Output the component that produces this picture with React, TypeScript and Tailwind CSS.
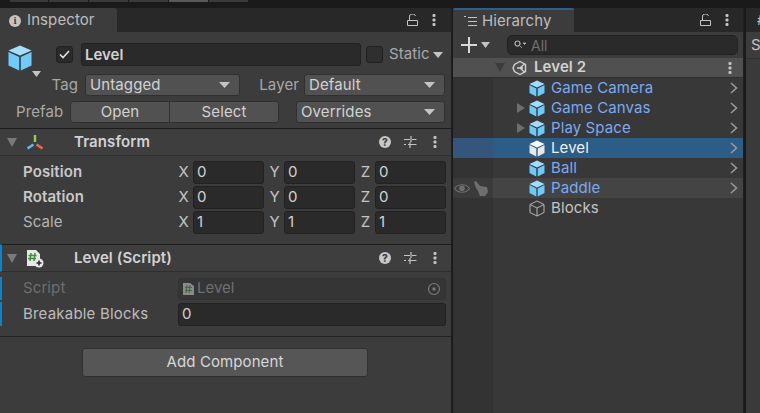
import React from "react";

const Cube = ({ kind = "blue" }: { kind?: "blue" | "white" | "outline" }) => {
  if (kind === "outline")
    return (
      <svg width="16" height="17" viewBox="0 0 16 17" className="shrink-0">
        <path d="M8 1 15 4.5V12.5L8 16 1 12.5V4.5Z M1 4.500 8 8 15 4.500 M8 8V16" fill="none" stroke="#b4b4b4" strokeWidth="1" />
      </svg>
    );
  const top = kind === "blue" ? "#9fdcff" : "#ffffff";
  const side = kind === "blue" ? "#6ccafa" : "#e8e8e8";
  return (
    <svg width="16" height="17" viewBox="0 0 16 17" className="shrink-0">
      <path d="M8 .5 15.500 4 8 7.500.5 4Z" fill={top} />
      <path d="M.5 5 7.300 8.400V16.500L.5 13Z" fill={side} />
      <path d="M15.500 5 8.700 8.400V16.500L15.500 13Z" fill={side} />
    </svg>
  );
};

const BigCube = () => (
  <svg width="24" height="26" viewBox="0 0 24 26">
    <path d="M12 .5 23.500 5.500 12 10.500.5 5.500Z" fill="#a4dfff" />
    <path d="M.5 7 11.200 12V25.500L.5 20.500Z" fill="#6fcbfb" />
    <path d="M23.500 7 12.800 12V25.500L23.500 20.500Z" fill="#6fcbfb" />
  </svg>
);

const Caret = ({ color = "#c4c4c4", w = 11 }: { color?: string; w?: number }) => (
  <svg width={w} height="6" viewBox="0 0 11 6" className="shrink-0" preserveAspectRatio="none">
    <path d="M0 0H11L5.500 6Z" fill={color} />
  </svg>
);

const Lock = () => (
  <svg width="11" height="12" viewBox="0 0 11 12" className="shrink-0">
    <path d="M.5 6.500H10.500V11.500H.5Z" fill="none" stroke="#c4c4c4" strokeWidth="1" />
    <path d="M2.500 6V3A3 2.500 0 0 1 8.500 2" fill="none" stroke="#c4c4c4" strokeWidth="1" />
  </svg>
);

const Dots = ({ color = "#c4c4c4" }: { color?: string }) => (
  <svg width="4" height="12" viewBox="0 0 4 12" className="shrink-0">
    <rect x="0.500" y="0" width="3" height="3" rx="1" fill={color} />
    <rect x="0.500" y="4.500" width="3" height="3" rx="1" fill={color} />
    <rect x="0.500" y="9" width="3" height="3" rx="1" fill={color} />
  </svg>
);

const Sliders = () => (
  <svg width="13" height="12" viewBox="0 0 13 12" className="shrink-0">
    <path d="M0 3.500H6M8 3.500H12.500M7 0V6M0 8.500H2M4 8.500H12.500M6 6V12" fill="none" stroke="#c4c4c4" strokeWidth="1.200" />
  </svg>
);

const Help = () => (
  <span className="flex h-3 w-3 shrink-0 items-center justify-center rounded-full bg-[#c8c8c8] text-[10px] leading-none font-extrabold text-[#3c3c3c]">?</span>
);

const Tri = ({ color = "#7a7a7a" }: { color?: string }) => (
  <svg width="10" height="9" viewBox="0 0 10 9" className="shrink-0">
    <path d="M0 0H10L5 9Z" fill={color} />
  </svg>
);

const Right = () => (
  <svg width="8" height="12" viewBox="0 0 8 12" className="shrink-0">
    <path d="M1 1 6.500 6 1 11" fill="none" stroke="#9a9a9a" strokeWidth="1.600" />
  </svg>
);

const Dropdown = ({ label, className }: { label: string; className: string }) => (
  <div className={`flex h-[22px] items-center justify-between rounded-[3px] border border-[#303030] bg-[#515151] pr-[9px] pl-[4px] text-[15px] tracking-[0.1px] text-[#d2d2d2] ${className}`}>
    <span>{label}</span>
    <Caret />
  </div>
);

const NumField = ({ axis, value }: { axis: string; value: string }) => (
  <div className="flex flex-1 items-center gap-[4px]">
    <span className="w-[11px] text-center text-[15px] text-[#c4c4c4]">{axis}</span>
    <div className="flex h-[23px] flex-1 items-center rounded-[3px] border border-[#212121] bg-[#2a2a2a] pl-[3px] text-[15px] text-[#d2d2d2]">{value}</div>
  </div>
);

const VecRow = ({ label, values, bold }: { label: string; values: string[]; bold?: boolean }) => (
  <div className="flex h-[25px] items-center">
    <span className={`w-[178px] pl-[23px] text-[15px] tracking-[0.1px] ${bold ? "font-semibold text-[#c8c8c8]" : "text-[#b4b4b4]"}`}>{label}</span>
    <div className="flex flex-1 gap-[5px]">
      <NumField axis="X" value={values[0]} />
      <NumField axis="Y" value={values[1]} />
      <NumField axis="Z" value={values[2]} />
    </div>
  </div>
);

const ComponentHeader = ({ icon, title, marked }: { icon: React.ReactNode; title: string; marked?: boolean }) => (
  <div className={`flex h-[28px] shrink-0 items-center border-y border-t-[#1c1c1c] border-b-[#2e2e2e] bg-[#3e3e3e] pr-[14px] ${marked ? "border-l-2 border-l-[#0a84d0]" : ""}`}>
    <div className={`flex items-center ${marked ? "w-[72px] pl-[5px]" : "w-[74px] pl-[7px]"}`}>
      <Tri />
      <span className="ml-[9px] flex w-[18px] justify-center">{icon}</span>
    </div>
    <span className="flex-1 text-[15px] font-semibold tracking-[0.1px] text-[#d2d2d2]">{title}</span>
    <div className="flex items-center">
      <Help />
      <span className="ml-[13px]"><Sliders /></span>
      <span className="ml-[16px]"><Dots /></span>
    </div>
  </div>
);

const TabLabel = ({ children }: { children: React.ReactNode }) => (
  <span className="text-[15px] tracking-[0.1px] text-[#bdbdbd]">{children}</span>
);

const HierRow = ({ label, kind = "blue", arrow, cls = "", textCls = "text-[#7baaf0]", strip = "bg-[#333333]", hint }: {
  label: string;
  kind?: "blue" | "white" | "outline";
  arrow?: boolean;
  cls?: string;
  textCls?: string;
  strip?: string;
  hint?: React.ReactNode;
}) => (
  <div className={`flex h-[20px] items-center ${cls}`}>
    <div className={`flex h-full w-[40px] shrink-0 items-center gap-[3px] pl-[1px] ${strip}`}>{hint}</div>
    <span className="flex w-[36px] shrink-0 justify-end pr-[4px]">
      {arrow && (
        <svg width="8" height="10" viewBox="0 0 8 10"><path d="M0 0 8 5 0 10Z" fill="#6e6e6e" /></svg>
      )}
    </span>
    <Cube kind={kind} />
    <span className={`ml-[6px] flex-1 text-[15px] tracking-[0.1px] ${textCls}`}>{label}</span>
    <span className="pr-[5px]"><Right /></span>
  </div>
);

export default function App() {
  return (
    <div className="flex h-[413px] w-[760px] flex-col overflow-hidden bg-[#1a1a1a] font-['Inter','Noto_Sans',sans-serif]">
      <div className="h-[8px] shrink-0">
        <div className="flex h-[2px]">
          <div className="ml-[10px] h-full w-[38px] bg-[#3a3a3a]" />
          <div className="ml-[1px] h-full w-[39px] bg-[#3a3a3a]" />
          <div className="ml-[1px] h-full w-[39px] bg-[#3a3a3a]" />
          <div className="ml-[1px] h-full w-[39px] bg-[#3a3a3a]" />
          <div className="ml-[1px] h-full w-[39px] bg-[#585858]" />
          <div className="ml-[1px] h-full w-[39px] bg-[#3a3a3a]" />
        </div>
      </div>
      <div className="flex min-h-0 flex-1">
        {/* Inspector */}
        <div className="mr-[1px] flex w-[452px] shrink-0 flex-col border-r border-[#1f1f1f]">
          <div className="flex h-[24px] shrink-0 bg-[#282828]">
            <div className="flex w-[117px] items-center gap-[6px] rounded-tr-[3px] bg-[#3c3c3c] pt-[1px] pl-[9px]">
              <span className="flex h-3 w-3 items-center justify-center rounded-full bg-[#c4c4c4] font-serif text-[10px] leading-none font-bold text-[#3c3c3c]">i</span>
              <TabLabel>Inspector</TabLabel>
            </div>
            <div className="flex flex-1 items-center justify-end gap-[14px] pr-[15px]">
              <Lock />
              <Dots />
            </div>
          </div>
          <div className="flex min-h-0 flex-1 flex-col bg-[#3c3c3c]">
            <div className="flex h-[96px] shrink-0 flex-col">
              <div className="flex h-[42px] shrink-0 pt-[11px] pr-[8px]">
                <div className="relative w-[56px] shrink-0 pt-[2px] pl-[8px]">
                  <BigCube />
                  <span className="absolute top-[28px] left-[32px]"><Caret w={9} /></span>
                </div>
                <div className="flex h-[17px] w-[17px] shrink-0 translate-y-[3px] items-center justify-center rounded-[3px] border border-[#212121] bg-[#2a2a2a]">
                  <svg width="11" height="9" viewBox="0 0 11 9"><path d="M1 4.500 4 7.500 10 1" fill="none" stroke="#e0e0e0" strokeWidth="1.600" /></svg>
                </div>
                <div className="ml-[8px] flex h-[23px] w-[280px] shrink-0 items-center rounded-[3px] border border-[#212121] bg-[#2a2a2a] pt-[1px] pl-[3px] text-[15px] font-semibold text-[#d2d2d2]">Level</div>
                <div className="ml-[5px] h-[17px] w-[17px] shrink-0 translate-y-[3px] rounded-[3px] border border-[#212121] bg-[#2f2f2f]" />
                <div className="ml-[6px] flex h-[23px] items-center gap-[3px] text-[15px] tracking-[0.1px] text-[#a8a8a8]">
                  Static
                  <Caret w={10} />
                </div>
              </div>
              <div className="flex h-[22px] shrink-0 items-center">
                <span className="w-[85px] pr-[7px] text-right text-[15px] tracking-[0.1px] text-[#a8a8a8]">Tag</span>
                <Dropdown label="Untagged" className="w-[155px]" />
                <span className="w-[64px] pr-[5px] text-right text-[15px] tracking-[0.1px] text-[#a8a8a8]">Layer</span>
                <Dropdown label="Default" className="w-[141px]" />
              </div>
              <div className="mt-[5px] flex h-[22px] shrink-0 items-center">
                <span className="w-[70px] pl-[16px] text-[15px] tracking-[0.1px] text-[#a8a8a8]">Prefab</span>
                <div className="flex h-full w-[209px] rounded-[3px] border border-[#303030] bg-[#515151] text-center text-[15px] tracking-[0.1px] text-[#d2d2d2]">
                  <span className="w-[99px] border-r border-[#303030] leading-[20px]">Open</span>
                  <span className="flex-1 leading-[20px]">Select</span>
                </div>
                <Dropdown label="Overrides" className="ml-[17px] w-[149px]" />
              </div>
            </div>
            <ComponentHeader
              title="Transform"
              icon={
                <svg width="16" height="15" viewBox="0 0 16 15">
                  <path d="M8 0V7" stroke="#8fd14f" strokeWidth="2.400" />
                  <path d="M9.500 9.500 15.500 13.500" stroke="#f0683c" strokeWidth="2.600" />
                  <path d="M6.500 9.500.5 13.500" stroke="#5cb8ef" strokeWidth="2.600" />
                </svg>
              }
            />
            <div className="flex shrink-0 flex-col pt-[4px] pr-[5px] pb-[9px]">
              <VecRow label="Position" values={["0", "0", "0"]} bold />
              <VecRow label="Rotation" values={["0", "0", "0"]} bold />
              <VecRow label="Scale" values={["1", "1", "1"]} />
            </div>
            <ComponentHeader
              marked
              title="Level (Script)"
              icon={
                <svg width="18" height="19" viewBox="0 0 18 19">
                  <path d="M1 1H10L14 5V17H1Z" fill="#e8e8e8" />
                  <path d="M5 4 4 12M9 4 8 12M2.500 6.500H10.500M2 9.500H10" stroke="#3e8e3e" strokeWidth="1.500" fill="none" />
                  <circle cx="13" cy="14" r="4.500" fill="#e8e8e8" />
                  <path d="M13 11.500V16.500M10.500 14H15.500" stroke="#2a2a2a" strokeWidth="1.600" />
                </svg>
              }
            />
            <div className="flex h-[65px] shrink-0 flex-col gap-[2px] border-b border-[#232323] pt-[5px] pr-[5px]">
              <div className="flex h-[23px] items-center border-l-2 border-[#0a84d0]">
                <span className="w-[176px] pl-[21px] text-[15px] tracking-[0.1px] text-[#6f6f6f]">Script</span>
                <div className="flex h-[22px] flex-1 items-center rounded-[3px] border border-[#333333] bg-[#353535] pr-[4px] pl-[4px] text-[15px] text-[#707070]">
                  <svg width="11" height="13" viewBox="0 0 11 13" className="mr-[3px]">
                    <path d="M0 1H7L11 4V13H0Z" fill="#8a8a8a" />
                    <path d="M4 3 3 11M7 3 6 11M2 5.500H9M2 8.500H9" stroke="#3f6a3f" strokeWidth="1.100" fill="none" />
                  </svg>
                  <span className="flex-1">Level</span>
                  <svg width="14" height="14" viewBox="0 0 14 14">
                    <circle cx="7" cy="7" r="5.500" fill="none" stroke="#7a7a7a" strokeWidth="1.200" />
                    <rect x="5.500" y="5.500" width="3" height="3" fill="#7a7a7a" />
                  </svg>
                </div>
              </div>
              <div className="flex h-[24px] items-center border-l-2 border-[#0a84d0]">
                <span className="w-[176px] pl-[21px] text-[15px] tracking-[0.2px] text-[#bdbdbd]">Breakable Blocks</span>
                <div className="flex h-[23px] flex-1 items-center rounded-[3px] border border-[#212121] bg-[#2a2a2a] pl-[3px] text-[15px] text-[#d2d2d2]">0</div>
              </div>
            </div>
            <div className="flex justify-center pt-[11px] pr-[1px]">
              <div className="flex h-[29px] w-[286px] items-center justify-center rounded-[3px] border border-[#303030] bg-[#565656] text-[15px] tracking-[0.1px] text-[#d8d8d8]">Add Component</div>
            </div>
          </div>
        </div>

        {/* Hierarchy */}
        <div className="mr-[2px] flex w-[291px] shrink-0 flex-col border-r border-[#1f1f1f]">
          <div className="flex h-[24px] shrink-0 bg-[#282828]">
            <div className="flex w-[121px] items-center gap-[5px] rounded-t-[2px] border-t-2 border-[#2d5f8d] bg-[#3c3c3c] pl-[11px]">
              <svg width="13" height="11" viewBox="0 0 13 11">
                <path d="M0 .5H2M4 1.500H13M4 5.500H13M4 9.500H13" stroke="#c4c4c4" strokeWidth="1" />
              </svg>
              <TabLabel>Hierarchy</TabLabel>
            </div>
            <div className="flex flex-1 items-center justify-end gap-[14px] pr-[14px]">
              <Lock />
              <Dots />
            </div>
          </div>
          <div className="flex h-[26px] shrink-0 items-center bg-[#3c3c3c]">
            <div className="flex w-[54px] shrink-0 items-center gap-[4px] pl-[8px]">
              <svg width="16" height="16" viewBox="0 0 16 16"><path d="M8 0V16M0 8H16" stroke="#d8d8d8" strokeWidth="2" /></svg>
              <Caret w={9} />
            </div>
            <div className="flex h-[20px] w-[231px] items-center gap-[5px] rounded-[5px] border border-[#212121] bg-[#2a2a2a] pl-[6px] text-[14px] text-[#707070]">
              <svg width="12" height="10" viewBox="0 0 12 10">
                <circle cx="3.500" cy="3.500" r="2.500" fill="none" stroke="#b0b0b0" strokeWidth="1.200" />
                <path d="M5.500 5.500 8 8M9 3H12L10.500 4.500Z" stroke="#b0b0b0" fill="#b0b0b0" strokeWidth="0.800" />
              </svg>
              All
            </div>
          </div>
          <div className="flex min-h-0 flex-1 flex-col bg-[#383838]">
            <div className="flex h-[20px] shrink-0 items-center border-b border-[#2e2e2e] bg-[#505050] pr-[11px]">
              <span className="ml-[42px]"><Tri color="#3c3c3c" /></span>
              <svg width="16" height="16" viewBox="0 0 16 16" className="ml-[7px]">
                <path d="M8 1.500 13.500 4.500V11.500L8 14.500 2.500 11.500 1 8 2.500 4.500Z M5 8 H11 M8 8 12.500 4 M8 8 12.500 12" fill="none" stroke="#d2d2d2" strokeWidth="1.400" />
              </svg>
              <span className="ml-[6px] flex-1 text-[15px] font-semibold tracking-[0.1px] text-[#d2d2d2]">Level 2</span>
              <Dots />
            </div>
            <HierRow label="Game Camera" />
            <HierRow label="Game Canvas" arrow />
            <HierRow label="Play Space" arrow />
            <HierRow label="Level" kind="white" cls="bg-[#2c5d87]" textCls="text-[#f0f0f0]" strip="bg-[#34557c]" />
            <HierRow label="Ball" />
            <HierRow
              label="Paddle"
              cls="bg-[#444444]"
              strip="bg-[#3b3b3b]"
              hint={
                <>
                  <svg width="16" height="11" viewBox="0 0 16 11">
                    <path d="M.5 5.500C4 .5 12 .5 15.500 5.500 12 10.500 4 10.500.5 5.500Z" fill="none" stroke="#6e6e6e" strokeWidth="1.200" />
                    <circle cx="8" cy="5.200" r="2.800" fill="#6e6e6e" />
                  </svg>
                  <svg width="15" height="15" viewBox="0 0 15 15">
                    <path d="M1 1 3 0 7 5 14 6 15 11 12 15H7L5 10 3 7Z" fill="#6e6e6e" />
                  </svg>
                </>
              }
            />
            <div className="flex h-[20px] items-center">
              <div className="h-full w-[40px] shrink-0 bg-[#333333]" />
              <span className="w-[36px] shrink-0" />
              <Cube kind="outline" />
              <span className="ml-[6px] text-[15px] tracking-[0.1px] text-[#c4c4c4]">Blocks</span>
            </div>
            <div className="w-[40px] flex-1 bg-[#333333]" />
          </div>
        </div>

        {/* Right panel */}
        <div className="flex min-w-0 flex-1 flex-col">
          <div className="h-[24px] shrink-0 bg-[#282828] pt-[6px] pl-[11px] text-[13px] leading-none text-[#c4c4c4]">#</div>
          <div className="flex h-[26px] shrink-0 items-center bg-[#3c3c3c] pl-[5px] text-[15px] text-[#c4c4c4]">S</div>
          <div className="flex-1 border-t border-[#303030] bg-[#3a3a3a]" />
        </div>
      </div>
    </div>
  );
}
